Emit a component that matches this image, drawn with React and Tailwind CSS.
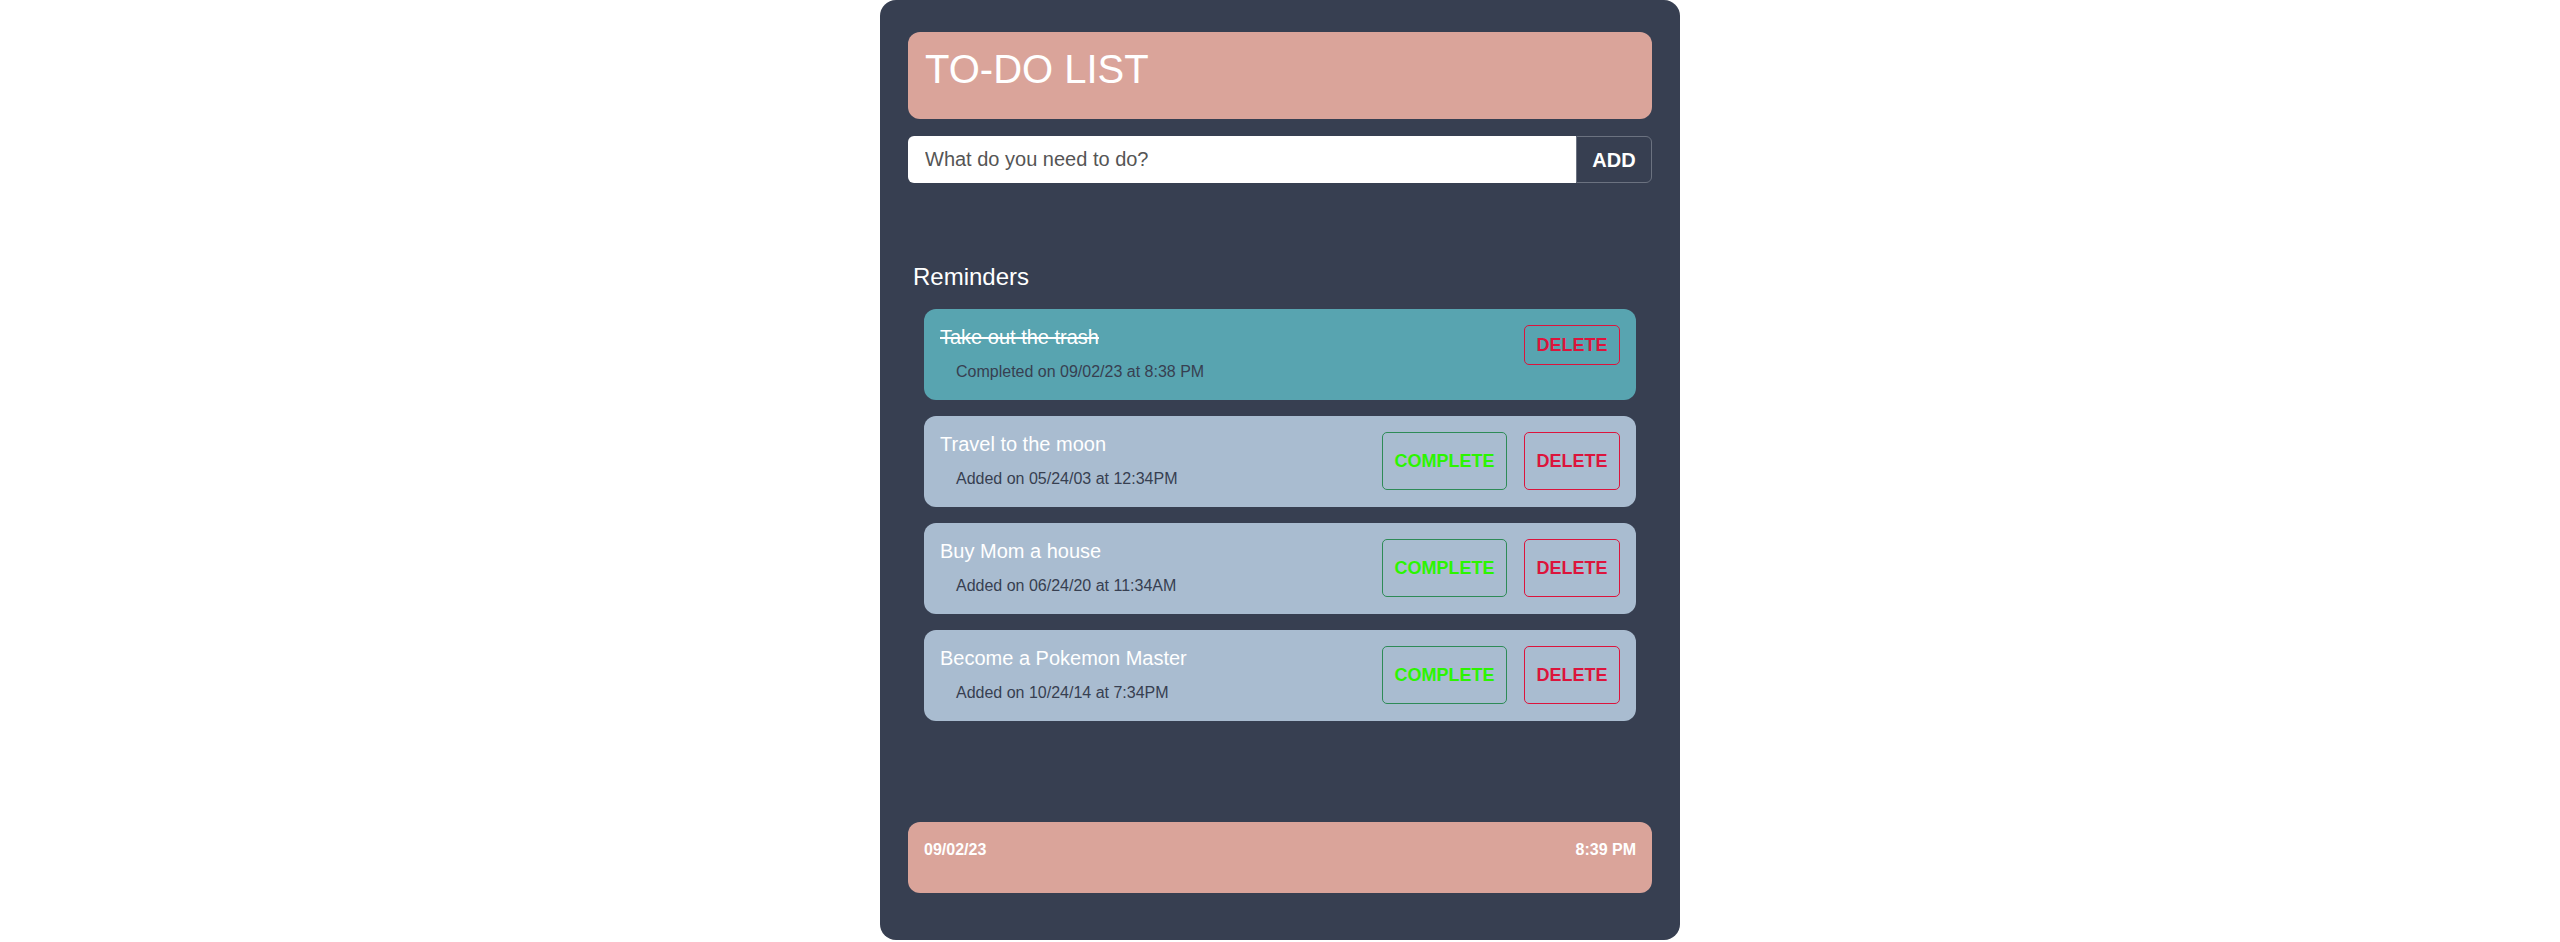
import React from "react";

const items = [
  { title: "Travel to the moon", sub: "Added on 05/24/03 at 12:34PM" },
  { title: "Buy Mom a house", sub: "Added on 06/24/20 at 11:34AM" },
  { title: "Become a Pokemon Master", sub: "Added on 10/24/14 at 7:34PM" },
];

function Card({ done, title, sub }) {
  return (
    <li
      className={`flex items-start justify-between rounded-xl px-4 pt-4 ${
        done ? "bg-[#58a4b0]" : "bg-[#a9bcd0]"
      }`}
    >
      <div className="flex flex-col pb-[19px] pt-[1px]">
        <span
          className={`text-[20px] leading-[23px] text-white ${
            done ? "line-through" : ""
          }`}
        >
          {title}
        </span>
        <span className="mt-[14px] pl-4 text-[16px] leading-[18px] text-[#373f51]">
          {sub}
        </span>
      </div>
      <div className="flex gap-[17px]">
        {!done && (
          <button className="h-[58px] w-[125px] rounded-[5px] border border-[#2e8b57] text-[18px] font-bold text-[#2cf500]">
            COMPLETE
          </button>
        )}
        <button
          className={`${
            done ? "h-[40px]" : "h-[58px]"
          } w-[96px] rounded-[5px] border border-[#dc143c] text-[18px] font-bold text-[#dc143c]`}
        >
          DELETE
        </button>
      </div>
    </li>
  );
}

export default function App() {
  return (
    <div
      className="flex min-h-screen justify-center bg-white"
      style={{ fontFamily: '"Liberation Sans", Arial, sans-serif' }}
    >
      <div className="flex h-[940px] w-[800px] flex-col rounded-2xl bg-[#373f51] px-[28px] pt-[32px]">
        <div className="h-[87px] rounded-xl bg-[#daa49a] pl-[17px] pt-[14px]">
          <h1 className="text-[40px] leading-[46px] text-white">TO-DO LIST</h1>
        </div>
        <div className="mt-[17px] flex h-[47px]">
          <input
            className="h-full flex-1 rounded-l-md bg-white pl-[17px] text-[20px] text-[#333] outline-none placeholder:text-[#555]"
            placeholder="What do you need to do?"
          />
          <button className="h-full w-[76px] rounded-r-md border border-[#6b7280] text-[20px] font-bold text-white">
            ADD
          </button>
        </div>
        <h2 className="mt-[80px] pl-[5px] text-[24px] leading-[28px] text-white">
          Reminders
        </h2>
        <ul className="mt-[18px] flex flex-col gap-4 px-4">
          <Card done title="Take out the trash" sub="Completed on 09/02/23 at 8:38 PM" />
          {items.map((it) => (
            <Card key={it.title} title={it.title} sub={it.sub} />
          ))}
        </ul>
        <div className="mt-[101px] flex h-[71px] items-start justify-between rounded-xl bg-[#daa49a] px-4 pt-[19px] text-[16px] font-bold leading-[18px] text-white">
          <span>09/02/23</span>
          <span>8:39 PM</span>
        </div>
      </div>
    </div>
  );
}
